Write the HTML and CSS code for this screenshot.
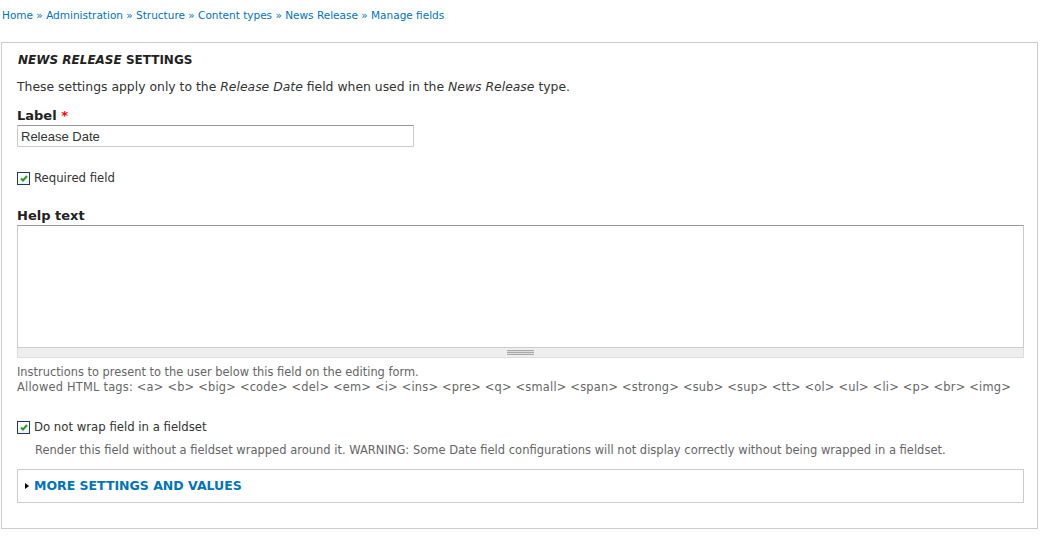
FILE: index.html
```html
<!DOCTYPE html>
<html lang="en">
<head>
  <meta charset="UTF-8">
  <title>Manage fields</title>
  <link rel="stylesheet" href="styles.css">
</head>
<body>
  <div class="breadcrumb">
    <a href="#">Home</a> » <a href="#">Administration</a> » <a href="#">Structure</a> » <a href="#">Content types</a> » <a href="#">News Release</a> » <a href="#">Manage fields</a>
  </div>

  <div class="fieldset settings">
    <div class="legend"><em>News Release</em> settings</div>
    <p class="intro">These settings apply only to the <em>Release Date</em> field when used in the <em>News Release</em> type.</p>

    <div class="form-item">
      <label class="title" for="label">Label <span class="required">*</span></label>
      <input type="text" id="label" class="text" value="Release Date">
    </div>

    <div class="form-item checkbox">
      <span class="check">
        <svg width="8" height="7" viewBox="0 0 8 7"><path d="M1 3.5 L3 5.5 L7 1" fill="none" stroke="#2a9a24" stroke-width="2"/></svg>
      </span>
      <label>Required field</label>
    </div>

    <div class="form-item help">
      <label class="title" for="help">Help text</label>
      <div class="textarea">
        <textarea id="help"></textarea>
        <div class="grippie"><span></span></div>
      </div>
      <div class="description">
        Instructions to present to the user below this field on the editing form.<br>
        <span class="tags">Allowed HTML tags: &lt;a&gt; &lt;b&gt; &lt;big&gt; &lt;code&gt; &lt;del&gt; &lt;em&gt; &lt;i&gt; &lt;ins&gt; &lt;pre&gt; &lt;q&gt; &lt;small&gt; &lt;span&gt; &lt;strong&gt; &lt;sub&gt; &lt;sup&gt; &lt;tt&gt; &lt;ol&gt; &lt;ul&gt; &lt;li&gt; &lt;p&gt; &lt;br&gt; &lt;img&gt;</span>
      </div>
    </div>

    <div class="form-item checkbox wrap">
      <span class="check">
        <svg width="8" height="7" viewBox="0 0 8 7"><path d="M1 3.5 L3 5.5 L7 1" fill="none" stroke="#2a9a24" stroke-width="2"/></svg>
      </span>
      <label>Do not wrap field in a fieldset</label>
    </div>
    <div class="description indent">Render this field without a fieldset wrapped around it. WARNING: Some Date field configurations will not display correctly without being wrapped in a fieldset.</div>

    <div class="fieldset collapsed">
      <a href="#" class="toggle"><span class="arrow"></span>More settings and values</a>
    </div>
  </div>
</body>
</html>
```

FILE: styles.css
```css
body {
  margin: 0;
  padding: 0;
  font-family: "DejaVu Sans", Verdana, sans-serif;
  font-size: 12px;
  color: #333;
  background-color: #fff;
}

a {
  color: #0074bd;
  text-decoration: none;
}

.breadcrumb {
  padding: 8px 2px 0;
  font-size: 10.5px;
  line-height: 14px;
  color: #0074bd;
}

.fieldset {
  border: 1px solid #ccc;
}

.settings {
  margin: 20px 4px 0 1px;
  padding: 8px 13px 25px 15px;
}

.legend {
  font-weight: bold;
  text-transform: uppercase;
  font-size: 12px;
  line-height: 18px;
  padding-left: 1px;
  color: #222;
}

.intro {
  margin: 9px 0 0;
  font-size: 12.4px;
  line-height: 18px;
}

.form-item {
  margin-top: 12px;
}

.title {
  display: block;
  font-weight: bold;
  font-size: 13px;
  line-height: 16px;
  color: #222;
  margin-bottom: 1px;
}

.required {
  color: #f00;
}

input.text {
  display: block;
  box-sizing: border-box;
  width: 397px;
  height: 22px;
  margin: 0;
  padding: 2px 3px;
  border: 1px solid #ccc;
  border-top-color: #999;
  font-family: "Liberation Sans", Arial, sans-serif;
  font-size: 13px;
  color: #333;
}

.checkbox {
  display: flex;
  align-items: center;
  margin-top: 24px;
  font-size: 11.7px;
  line-height: 14px;
}

.check {
  display: flex;
  align-items: center;
  justify-content: center;
  width: 11px;
  height: 11px;
  border: 1px solid #1d3c5f;
  background: linear-gradient(#fff, #eef0f3);
  margin-right: 4px;
}

.help {
  margin-top: 23px;
}

.textarea textarea {
  display: block;
  box-sizing: border-box;
  width: 100%;
  height: 123px;
  margin: 0;
  border: 1px solid #ccc;
  border-top-color: #999;
  resize: none;
}

.grippie {
  height: 9px;
  background-color: #eee;
  border: 1px solid #ddd;
  border-top: none;
  display: flex;
  justify-content: center;
  align-items: center;
}

.grippie span {
  width: 27px;
  height: 5px;
  background: repeating-linear-gradient(#aaa 0, #aaa 1px, #ddd 1px, #ddd 2px);
}

.description {
  font-size: 11.4px;
  line-height: 15px;
  color: #666;
  margin-top: 7px;
}

.tags {
  white-space: nowrap;
  letter-spacing: 0.22px;
}

.wrap {
  margin-top: 25px;
}

.indent {
  margin: 9px 0 0 18px;
  font-size: 11.5px;
}

.collapsed {
  margin-top: 11px;
  padding: 8px 7px 9px;
}

.toggle {
  display: flex;
  align-items: center;
  font-weight: bold;
  text-transform: uppercase;
  font-size: 12.5px;
  line-height: 15px;
}

.arrow {
  width: 0;
  height: 0;
  border-top: 3.5px solid transparent;
  border-bottom: 3.5px solid transparent;
  border-left: 4px solid #000;
  margin-right: 5px;
}
```
